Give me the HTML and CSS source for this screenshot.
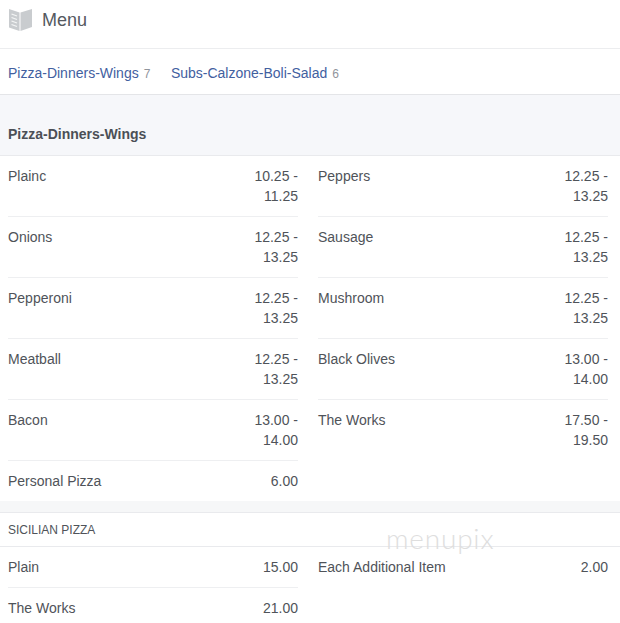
FILE: index.html
```html
<!DOCTYPE html>
<html lang="en">
<head>
<meta charset="utf-8">
<title>Menu</title>
<link rel="stylesheet" href="styles.css">
</head>
<body>
<header class="head">
  <svg class="book" width="24" height="24" viewBox="0 0 24 24" aria-hidden="true">
    <path fill="#c9cccf" d="M1 1 L11.500 4.500 L11.500 23 L1 19.500 Z"/>
    <path fill="#c9cccf" d="M12.500 4.500 L24 1 L24 19 L12.500 23 Z"/>
    <path fill="none" stroke="#f4f5f5" stroke-width="1.300" d="M3.500 6 L9 8 M3.500 9.500 L9 11.500 M3.500 13 L9 15 M3.500 16.500 L9 18.500"/>
  </svg>
  <h1 class="title">Menu</h1>
</header>
<nav class="tabs">
  <a class="tab">Pizza-Dinners-Wings<span class="count">7</span></a>
  <a class="tab">Subs-Calzone-Boli-Salad<span class="count">6</span></a>
</nav>
<h2 class="section">Pizza-Dinners-Wings</h2>
<div class="grid">
  <div class="item"><span>Plainc</span><span class="price">10.25 - 11.25</span></div>
  <div class="item"><span>Peppers</span><span class="price">12.25 - 13.25</span></div>
  <div class="item"><span>Onions</span><span class="price">12.25 - 13.25</span></div>
  <div class="item"><span>Sausage</span><span class="price">12.25 - 13.25</span></div>
  <div class="item"><span>Pepperoni</span><span class="price">12.25 - 13.25</span></div>
  <div class="item"><span>Mushroom</span><span class="price">12.25 - 13.25</span></div>
  <div class="item"><span>Meatball</span><span class="price">12.25 - 13.25</span></div>
  <div class="item"><span>Black Olives</span><span class="price">13.00 - 14.00</span></div>
  <div class="item"><span>Bacon</span><span class="price">13.00 - 14.00</span></div>
  <div class="item plain"><span>The Works</span><span class="price">17.50 - 19.50</span></div>
  <div class="item short plain"><span>Personal Pizza</span><span class="price">6.00</span></div>
</div>
<div class="spacer"></div>
<h3 class="sub">SICILIAN PIZZA</h3>
<div class="grid">
  <div class="item short"><span>Plain</span><span class="price">15.00</span></div>
  <div class="item short plain"><span>Each Additional Item</span><span class="price">2.00</span></div>
  <div class="item short plain"><span>The Works</span><span class="price">21.00</span></div>
</div>
<div class="mark">menupix</div>
</body>
</html>
```
FILE: styles.css
```css
* { box-sizing: border-box; }
html, body { margin: 0; padding: 0; }
body {
  position: relative;
  height: 623px;
  overflow: hidden;
  background: #fff;
  color: #4f5359;
  font-family: "Liberation Sans", Arial, sans-serif;
  font-size: 14px;
  line-height: 20px;
}
.head {
  display: flex;
  align-items: center;
  height: 49px;
  padding: 0 0 9px 8px;
  border-bottom: 1px solid #ecedef;
}
.book { display: block; flex: none; }
.title {
  margin: 0 0 0 10px;
  font-size: 18px;
  font-weight: 400;
  line-height: 24px;
  color: #55595f;
}
.tabs {
  display: flex;
  gap: 20.5px;
  height: 46px;
  padding: 14px 8px 0;
  border-bottom: 1px solid #e4e5e8;
}
.tab { color: #42609f; white-space: nowrap; }
.count { margin-left: 5px; font-size: 12px; color: #90949c; }
.section {
  margin: 0;
  height: 61px;
  padding: 29px 8px 0;
  background: #f6f7fa;
  border-bottom: 1px solid #e9eaed;
  font-size: 14px;
  font-weight: 700;
  line-height: 20px;
  color: #4b4f56;
}
.grid {
  display: grid;
  grid-template-columns: 290px 290px;
  column-gap: 20px;
  padding: 0 12px 0 8px;
}
.item {
  display: flex;
  justify-content: space-between;
  gap: 20px;
  height: 61px;
  padding: 10px 0;
  border-bottom: 1px solid #eeeff1;
}
.item.short { height: 41px; }
.item.plain { border-bottom: 0; }
.grid:first-of-type .item.short { height: 40px; }
.price { flex: none; width: 46px; text-align: right; }
.spacer {
  height: 12px;
  background: #f6f7f8;
  border-bottom: 1px solid #e9eaed;
}
.sub {
  margin: 0;
  height: 34px;
  padding: 7px 8px 0;
  border-bottom: 1px solid #e9eaed;
  font-size: 12px;
  font-weight: 400;
  line-height: 20px;
  color: #4f5359;
}
.mark {
  position: absolute;
  left: 386px;
  top: 522px;
  font-family: Lato, sans-serif;
  font-weight: 300;
  font-size: 28px;
  line-height: 32px;
  letter-spacing: 0.8px;
  color: #dedede;
}
```
